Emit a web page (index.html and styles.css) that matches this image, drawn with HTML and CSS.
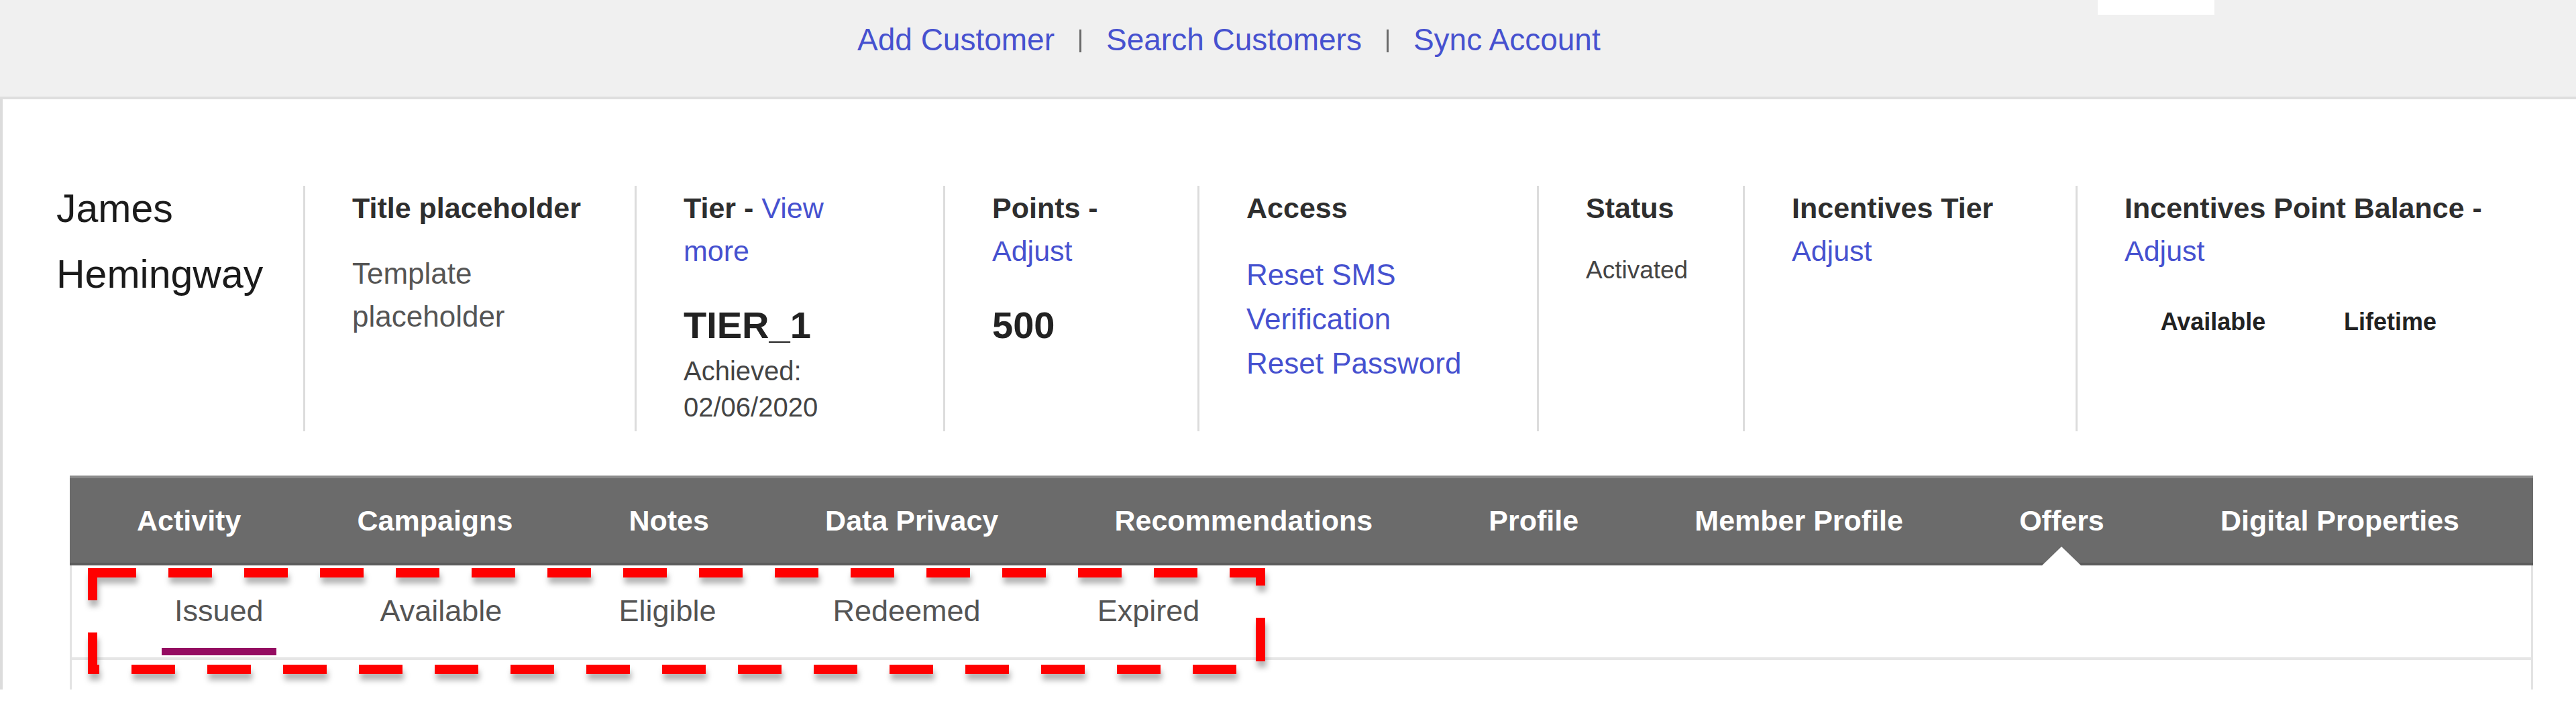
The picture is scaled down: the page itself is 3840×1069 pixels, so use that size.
FILE: index.html
```html
<!DOCTYPE html>
<html>
<head>
  <meta charset="utf-8">
  <link rel="stylesheet" href="styles.css">
</head>
<body>
  <header class="topbar">
    <nav class="toplinks">
      <a href="#">Add Customer</a>
      <span class="sep"></span>
      <a href="#">Search Customers</a>
      <span class="sep"></span>
      <a href="#">Sync Account</a>
    </nav>
    <div class="topbar-tab"></div>
  </header>

  <main class="panel">
    <section class="summary">
      <div class="summary-col">
        <h2 class="name">James<br>Hemingway</h2>
      </div>

      <div class="summary-col">
        <h4 class="label">Title placeholder</h4>
        <p class="value">Template<br>placeholder</p>
      </div>

      <div class="summary-col">
        <h4 class="label">Tier - <a href="#">View<br>more</a></h4>
        <div class="big">TIER_1</div>
        <p class="meta">Achieved:<br>02/06/2020</p>
      </div>

      <div class="summary-col">
        <h4 class="label">Points -<br><a href="#">Adjust</a></h4>
        <div class="big">500</div>
      </div>

      <div class="summary-col">
        <h4 class="label">Access</h4>
        <div class="links">
          <a href="#">Reset SMS<br>Verification</a>
          <a href="#">Reset Password</a>
        </div>
      </div>

      <div class="summary-col">
        <h4 class="label">Status</h4>
        <p class="status">Activated</p>
      </div>

      <div class="summary-col">
        <h4 class="label">Incentives Tier<br><a href="#">Adjust</a></h4>
      </div>

      <div class="summary-col">
        <h4 class="label">Incentives Point Balance -<br><a href="#">Adjust</a></h4>
        <table class="balance">
          <tr>
            <th>Available</th>
            <th>Lifetime</th>
          </tr>
        </table>
      </div>
    </section>

    <section class="tabs-wrap">
      <nav class="tabbar">
        <a href="#" class="tab">Activity</a>
        <a href="#" class="tab">Campaigns</a>
        <a href="#" class="tab">Notes</a>
        <a href="#" class="tab">Data Privacy</a>
        <a href="#" class="tab">Recommendations</a>
        <a href="#" class="tab">Profile</a>
        <a href="#" class="tab">Member Profile</a>
        <a href="#" class="tab active">Offers</a>
        <a href="#" class="tab">Digital Properties</a>
      </nav>
      <div class="tab-body">
        <nav class="subtabs">
          <a href="#" class="subtab active">Issued</a>
          <a href="#" class="subtab">Available</a>
          <a href="#" class="subtab">Eligible</a>
          <a href="#" class="subtab">Redeemed</a>
          <a href="#" class="subtab">Expired</a>
        </nav>
      </div>
    </section>
  </main>

  <!-- review markup drawn over the sub tabs -->
  <div class="annotation">
    <svg width="1755" height="158" viewBox="0 0 1755 158">
      <rect x="7" y="7" width="1741" height="144" fill="none" stroke="#ff0000" stroke-width="14" stroke-dasharray="65 48"/>
    </svg>
  </div>
</body>
</html>
```

FILE: styles.css
```css
:root {
  --link: #4651cf;
  --heading: #2e2e2e;
  --text: #4a4a4a;
  --rule: #dcdcdc;
  --tabbar: #6b6b6b;
  --accent: #950c62;
}

body {
  margin: 0;
  width: 3840px;
  min-height: 1069px;
  position: relative;
  background: #ffffff;
  font-family: "Liberation Sans", Arial, sans-serif;
  color: var(--text);
}

a {
  color: var(--link);
  text-decoration: none;
}

/* top bar */

.topbar {
  display: flex;
  align-items: flex-start;
  height: 144px;
  padding-left: 1278px;
  background: #f0f0f0;
  border-bottom: 4px solid #dedede;
}

.toplinks {
  display: flex;
  align-items: center;
  margin-top: 27px;
  font-size: 46px;
  line-height: 64px;
}

.toplinks .sep {
  width: 3px;
  height: 34px;
  margin: 4px 37px 0;
  background: #6a6a6a;
}

.topbar-tab {
  width: 174px;
  height: 22px;
  margin-left: auto;
  margin-right: 539px;
  background: #ffffff;
}

/* customer panel */

.panel {
  display: flex;
  flex-direction: column;
  height: 880px;
  box-sizing: border-box;
  padding-top: 129px;
  border-left: 4px solid var(--rule);
}

.summary {
  display: grid;
  grid-template-columns: 448px 494px 460px 379px 506px 307px 496px 1fr;
  height: 366px;
}

.summary-col {
  padding-top: 1px;
}

.summary-col:first-child {
  padding-left: 80px;
}

.summary-col + .summary-col {
  padding-left: 70px;
  border-left: 3px solid var(--rule);
}

.name {
  margin: -16px 0 0;
  font-size: 59px;
  font-weight: normal;
  line-height: 98px;
  color: #1b1b1b;
}

.label {
  margin: 0;
  font-size: 43px;
  font-weight: bold;
  line-height: 64px;
  color: var(--heading);
}

.label a {
  font-weight: normal;
}

.value {
  margin: 34px 0 0;
  font-size: 44px;
  line-height: 64px;
  color: #555555;
}

.big {
  margin-top: 44px;
  font-size: 56px;
  font-weight: bold;
  line-height: 70px;
  color: #222222;
}

.meta {
  margin: 6px 0 0;
  font-size: 40px;
  line-height: 54px;
  color: #444444;
}

.links {
  margin-top: 35px;
  font-size: 44px;
  line-height: 66px;
}

.links a {
  display: block;
}

.status {
  margin: 34px 0 0;
  font-size: 37px;
  line-height: 54px;
  color: #444444;
}

.balance {
  margin-top: 47px;
  border-collapse: collapse;
}

.balance th {
  width: 264px;
  padding: 0;
  font-size: 36px;
  line-height: 54px;
  text-align: center;
  color: #222222;
}

/* tabs */

.tabs-wrap {
  flex: 1;
  display: flex;
  flex-direction: column;
  margin: 66px 64px 0 100px;
}

.tabbar {
  display: flex;
  justify-content: space-between;
  height: 134px;
  box-sizing: border-box;
  padding: 0 110px 0 100px;
  background: var(--tabbar);
  border-top: 4px solid #8a8a8a;
  border-bottom: 4px solid #5c5c5c;
}

.tab {
  position: relative;
  display: flex;
  align-items: center;
  font-size: 43px;
  font-weight: bold;
  color: #ffffff;
}

.tab.active::after {
  content: "";
  position: absolute;
  left: 50%;
  bottom: -4px;
  margin-left: -29px;
  border-style: solid;
  border-color: transparent transparent #ffffff;
  border-width: 0 29px 28px;
}

.tab-body {
  flex: 1;
  border-left: 3px solid #e3e3e3;
  border-right: 3px solid #e3e3e3;
}

.subtabs {
  display: flex;
  gap: 136px;
  height: 141px;
  box-sizing: border-box;
  padding-left: 134px;
  border-bottom: 4px solid #e6e6e6;
}

.subtab {
  height: 134px;
  box-sizing: border-box;
  padding: 38px 19px 0;
  font-size: 45px;
  line-height: 60px;
  color: #555555;
}

.subtab.active {
  border-bottom: 11px solid var(--accent);
}

/* annotation */

.annotation {
  position: absolute;
  left: 131px;
  top: 847px;
  width: 1755px;
  height: 158px;
  pointer-events: none;
  filter: drop-shadow(2px 9px 4px rgba(0, 0, 0, 0.3));
}

.annotation svg {
  display: block;
}
```
